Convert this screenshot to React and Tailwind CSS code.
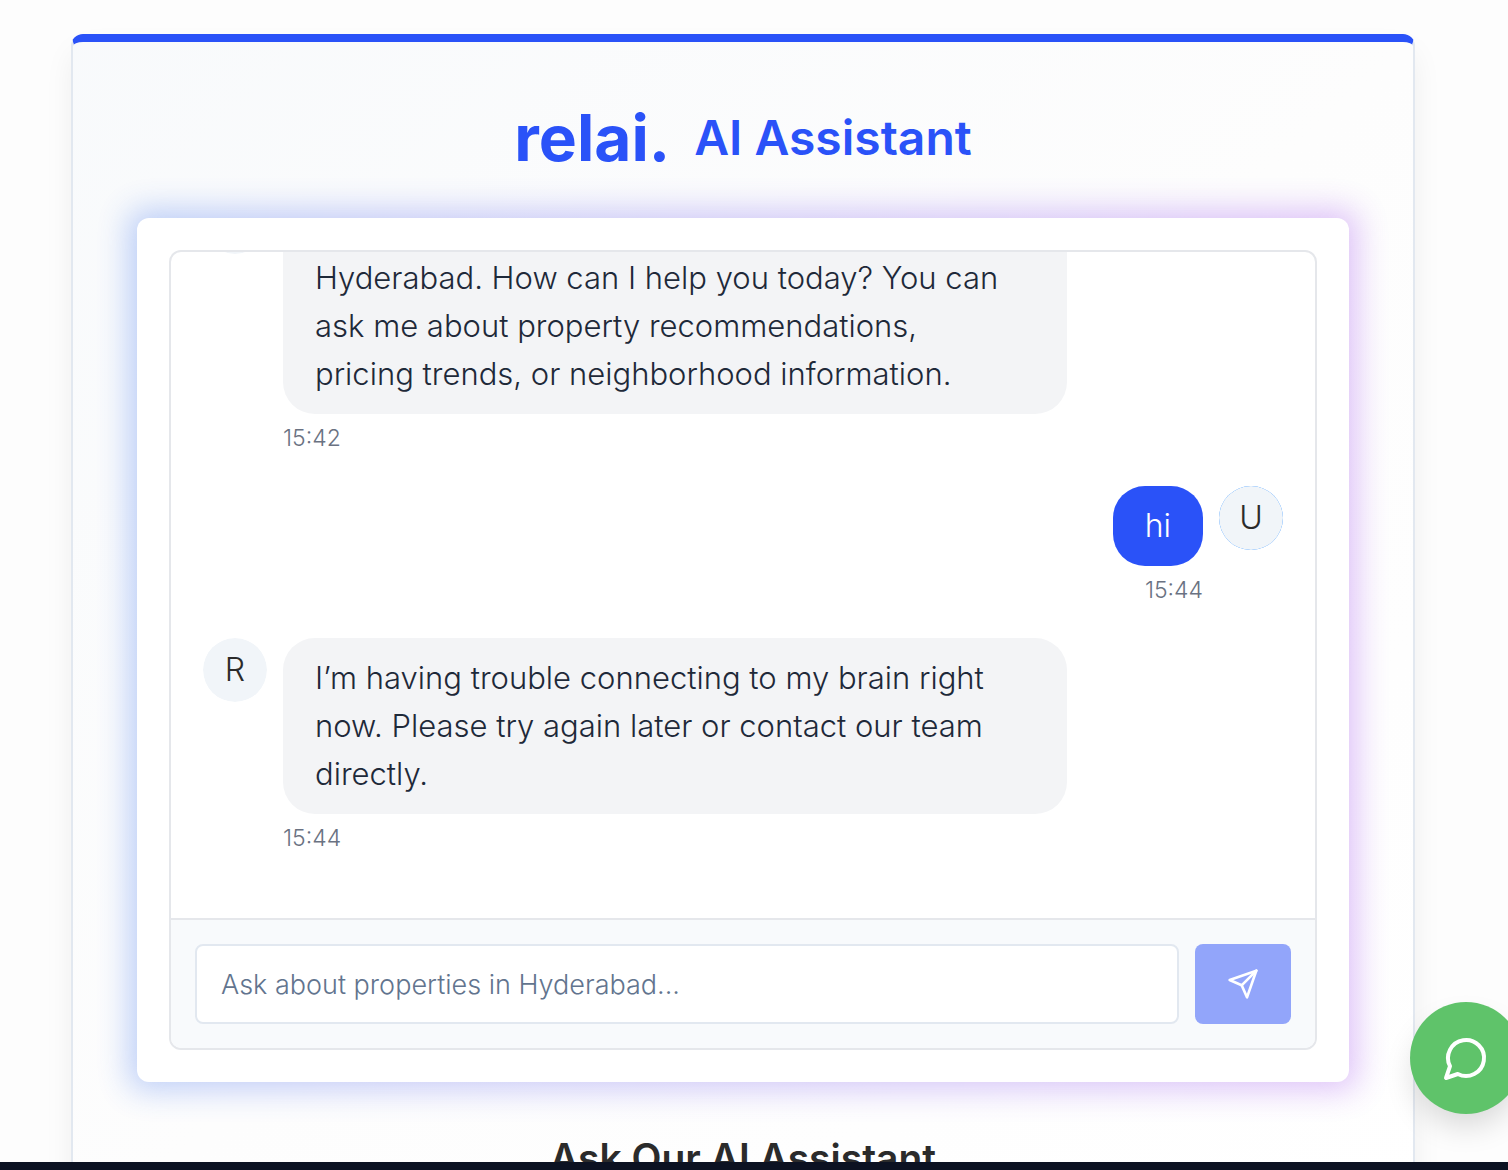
function Avatar({ letter, user }) {
  return (
    <span
      className={
        user
          ? "flex size-16 shrink-0 overflow-hidden rounded-full bg-blue-400"
          : "flex size-16 shrink-0 overflow-hidden rounded-full"
      }
    >
      <span className="flex size-full items-center justify-center rounded-full bg-slate-100 text-[32px] text-[#2b2b2b]">
        {letter}
      </span>
    </span>
  );
}

function BotMessage({ letter, lines, time, scrolled }) {
  return (
    <div className="flex w-4/5 shrink-0 gap-4">
      <Avatar letter={letter} />
      <div className="min-w-0 flex-1">
        <div
          className={
            scrolled
              ? "rounded-[32px] bg-gray-100 px-8 pt-16 pb-4 text-[31px] leading-[48px] whitespace-nowrap text-gray-800"
              : "rounded-[32px] bg-gray-100 px-8 py-4 text-[31px] leading-[48px] whitespace-nowrap text-gray-800"
          }
        >
          {lines.map((line) => (
            <p key={line}>{line}</p>
          ))}
        </div>
        <p className="mt-2 text-[23px] leading-8 text-gray-500">{time}</p>
      </div>
    </div>
  );
}

function UserMessage({ text, time }) {
  return (
    <div className="flex shrink-0 justify-end gap-4">
      <div className="flex flex-col items-end">
        <div className="rounded-[32px] bg-[#2a52f8] px-8 py-4 text-[32px] leading-[48px] text-white">{text}</div>
        <p className="mt-2 text-[23px] leading-8 text-gray-500">{time}</p>
      </div>
      <Avatar letter="U" user />
    </div>
  );
}

export default function App() {
  return (
    <div className="relative flex h-screen flex-col overflow-hidden bg-[#fdfdfd] font-['Inter',sans-serif] font-light">
      <main className="min-h-0 flex-1 overflow-hidden pt-[34px] pr-[93px] pl-[71px]">
        <section className="rounded-xl border-x-2 border-t-8 border-x-slate-200 border-t-[#2a52f8] bg-linear-to-br from-slate-50 via-[#fdfdfd] to-white px-16 pt-16 pb-16 shadow-[0_16px_32px_-4px_rgba(0,0,0,0.08)]">
          <h1 className="flex h-16 items-center justify-center gap-6 text-[#2a52f8]">
            <span className="text-[64px] leading-none font-bold">relai.</span>
            <span className="text-[48px] leading-none font-semibold">AI Assistant</span>
          </h1>

          <div className="relative mt-12">
            <div className="absolute -inset-2 rounded-xl bg-linear-to-r from-[#2563eb] to-[#9333ea] opacity-30 blur-lg" />
            <div className="relative rounded-xl bg-white p-8">
              <div className="flex h-[800px] flex-col overflow-hidden rounded-xl border-2 border-gray-200">
                <div className="flex min-h-0 flex-1 flex-col justify-end gap-8 overflow-hidden px-8 pb-16">
                  <BotMessage
                    scrolled
                    lines={[
                      "Hyderabad. How can I help you today? You can",
                      "ask me about property recommendations,",
                      "pricing trends, or neighborhood information.",
                    ]}
                    time="15:42"
                  />
                  <UserMessage text="hi" time="15:44" />
                  <BotMessage
                    letter="R"
                    lines={[
                      "I’m having trouble connecting to my brain right",
                      "now. Please try again later or contact our team",
                      "directly.",
                    ]}
                    time="15:44"
                  />
                </div>
                <form
                  className="flex gap-4 border-t-2 border-gray-200 bg-slate-50 p-6"
                  onSubmit={(e) => e.preventDefault()}
                >
                  <input
                    type="text"
                    aria-label="Your question"
                    placeholder="Ask about properties in Hyderabad..."
                    className="h-20 min-w-0 flex-1 rounded-lg border-2 border-slate-200 bg-white px-6 text-[27px] placeholder:text-slate-500"
                  />
                  <button
                    type="submit"
                    aria-label="Send"
                    className="flex h-20 w-24 items-center justify-center rounded-lg bg-[#92a5fa] text-white"
                  >
                    <svg
                      className="size-8"
                      viewBox="0 0 24 24"
                      fill="none"
                      stroke="currentColor"
                      strokeWidth="2"
                      strokeLinecap="round"
                      strokeLinejoin="round"
                    >
                      <path d="m22 2-7 20-4-9-9-4Z" />
                      <path d="M22 2 11 13" />
                    </svg>
                  </button>
                </form>
              </div>
            </div>
          </div>

          <h2 className="mt-12 text-center text-[39px] leading-[56px] font-semibold text-[#2b2b2b]">
            Ask Our AI Assistant
          </h2>
        </section>
      </main>
      <footer className="relative h-2 shrink-0 bg-[#0c1222]" />
      <button
        type="button"
        aria-label="Open chat"
        className="absolute -right-3.5 bottom-14 flex size-28 items-center justify-center rounded-full bg-[#5fc36a] text-white shadow-[0_16px_30px_-4px_rgba(0,0,0,0.15)]"
      >
        <svg
          className="size-12"
          viewBox="0 0 24 24"
          fill="none"
          stroke="currentColor"
          strokeWidth="2"
          strokeLinecap="round"
          strokeLinejoin="round"
        >
          <path d="M7.9 20A9 9 0 1 0 4 16.1L2 22Z" />
        </svg>
      </button>
    </div>
  );
}
